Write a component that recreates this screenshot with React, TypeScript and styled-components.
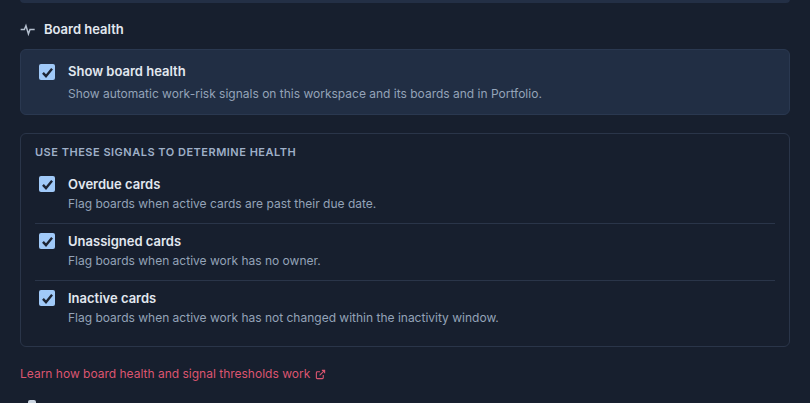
import styled, { createGlobalStyle } from 'styled-components';

const GlobalStyle = createGlobalStyle`
  html, body {
    margin: 0;
    height: 100%;
    overflow: hidden;
    background: #171f2e;
  }
`;

const Page = styled.div`
  width: 810px;
  height: 403px;
  overflow: hidden;
  box-sizing: border-box;
  padding: 0 20px;
  font-family: Inter, "Liberation Sans", sans-serif;
  display: flex;
  flex-direction: column;
`;

const PrevPanel = styled.div`
  height: 4px;
  flex: none;
  margin-top: -1px;
  background: #232f45;
  border-radius: 0 0 6px 6px;
`;

const SectionHeader = styled.div`
  display: flex;
  align-items: center;
  gap: 9px;
  margin-top: 16px;
  height: 20px;
  flex: none;
  color: #e2e8f0;
  font-size: 13px;
  font-weight: 600;
  line-height: 20px;
`;

const MasterCard = styled.div`
  flex: none;
  margin-top: 10px;
  height: 66px;
  box-sizing: border-box;
  padding: 12px 18px;
  display: flex;
  gap: 13px;
  background: #212e44;
  border: 1px solid #2a3850;
  border-radius: 6px;
`;

const SignalsCard = styled.div`
  flex: none;
  margin-top: 18px;
  height: 214px;
  box-sizing: border-box;
  padding: 10px 14px 0;
  border: 1px solid #2a3549;
  border-radius: 6px;
`;

const SignalsTitle = styled.div`
  color: #9fb0c8;
  font-size: 11px;
  font-weight: 600;
  letter-spacing: 0.5px;
  line-height: 16px;
  text-transform: uppercase;
  margin-bottom: 6px;
`;

const SignalRow = styled.div<{ $first?: boolean }>`
  height: 57px;
  box-sizing: border-box;
  display: flex;
  gap: 13px;
  padding: 8px 0 0 4px;
  border-top: 1px solid ${(p) => (p.$first ? 'transparent' : '#2a3549')};
`;

const Box = styled.span<{ $master?: boolean }>`
  flex: none;
  width: 16px;
  height: 16px;
  margin-top: ${(p) => (p.$master ? '2px' : '1px')};
  border-radius: 2px;
  background: #a0c9f8;
  display: flex;
  align-items: center;
  justify-content: center;
`;

const Text = styled.div`
  display: flex;
  flex-direction: column;
`;

const Label = styled.span`
  color: #e2e8f0;
  font-size: 13px;
  font-weight: 600;
  line-height: 18px;
`;

const Description = styled.span<{ $master?: boolean }>`
  color: #94a3b8;
  font-size: 12px;
  line-height: 18px;
  margin-top: ${(p) => (p.$master ? '5px' : '2px')};
`;

const HelpLink = styled.a`
  flex: none;
  margin-top: 18px;
  display: flex;
  align-items: center;
  gap: 5px;
  color: #dc5570;
  font-size: 12px;
  line-height: 18px;
  text-decoration: none;
`;

const NextHeader = styled.div`
  flex: none;
  margin-top: 17px;
  padding-left: 6px;
  display: flex;
  align-items: center;
  gap: 10px;
`;

function Check({ master }: { master?: boolean }) {
  return (
    <Box $master={master}>
      <svg width="13" height="13" viewBox="0 0 12 12" fill="none">
        <path d="M1.800 6.400 4.600 9.400 10.200 2.600" stroke="#1c2433" strokeWidth="2.200" />
      </svg>
    </Box>
  );
}

const signals = [
  { label: 'Overdue cards', text: 'Flag boards when active cards are past their due date.' },
  { label: 'Unassigned cards', text: 'Flag boards when active work has no owner.' },
  { label: 'Inactive cards', text: 'Flag boards when active work has not changed within the inactivity window.' },
];

export default function App() {
  return (
    <Page>
      <GlobalStyle />
      <PrevPanel />
      <SectionHeader>
        <svg width="15" height="15" viewBox="0 0 24 24" fill="none" stroke="#b4bfce" strokeWidth="2.400">
          <path d="M1 12h6l2.500 -6 4 13 2.500 -7h7.500" />
        </svg>
        Board health
      </SectionHeader>
      <MasterCard>
        <Check master />
        <Text>
          <Label>Show board health</Label>
          <Description $master>Show automatic work-risk signals on this workspace and its boards and in Portfolio.</Description>
        </Text>
      </MasterCard>
      <SignalsCard>
        <SignalsTitle>Use these signals to determine health</SignalsTitle>
        {signals.map((s, i) => (
          <SignalRow key={s.label} $first={i === 0}>
            <Check />
            <Text>
              <Label>{s.label}</Label>
              <Description>{s.text}</Description>
            </Text>
          </SignalRow>
        ))}
      </SignalsCard>
      <HelpLink href="#">
        Learn how board health and signal thresholds work
        <svg width="11" height="11" viewBox="0 0 24 24" fill="none" stroke="#dc5570" strokeWidth="2.400">
          <path d="M18 13v6a2 2 0 0 1-2 2H5a2 2 0 0 1-2-2V8a2 2 0 0 1 2-2h6" />
          <path d="M15 3h6v6M10 14 21 3" />
        </svg>
      </HelpLink>
      <NextHeader>
        <svg width="12" height="14" viewBox="0 0 12 14" fill="#cbd5e1">
          <rect x="2" y="0" width="8" height="14" rx="2" />
        </svg>
      </NextHeader>
    </Page>
  );
}
